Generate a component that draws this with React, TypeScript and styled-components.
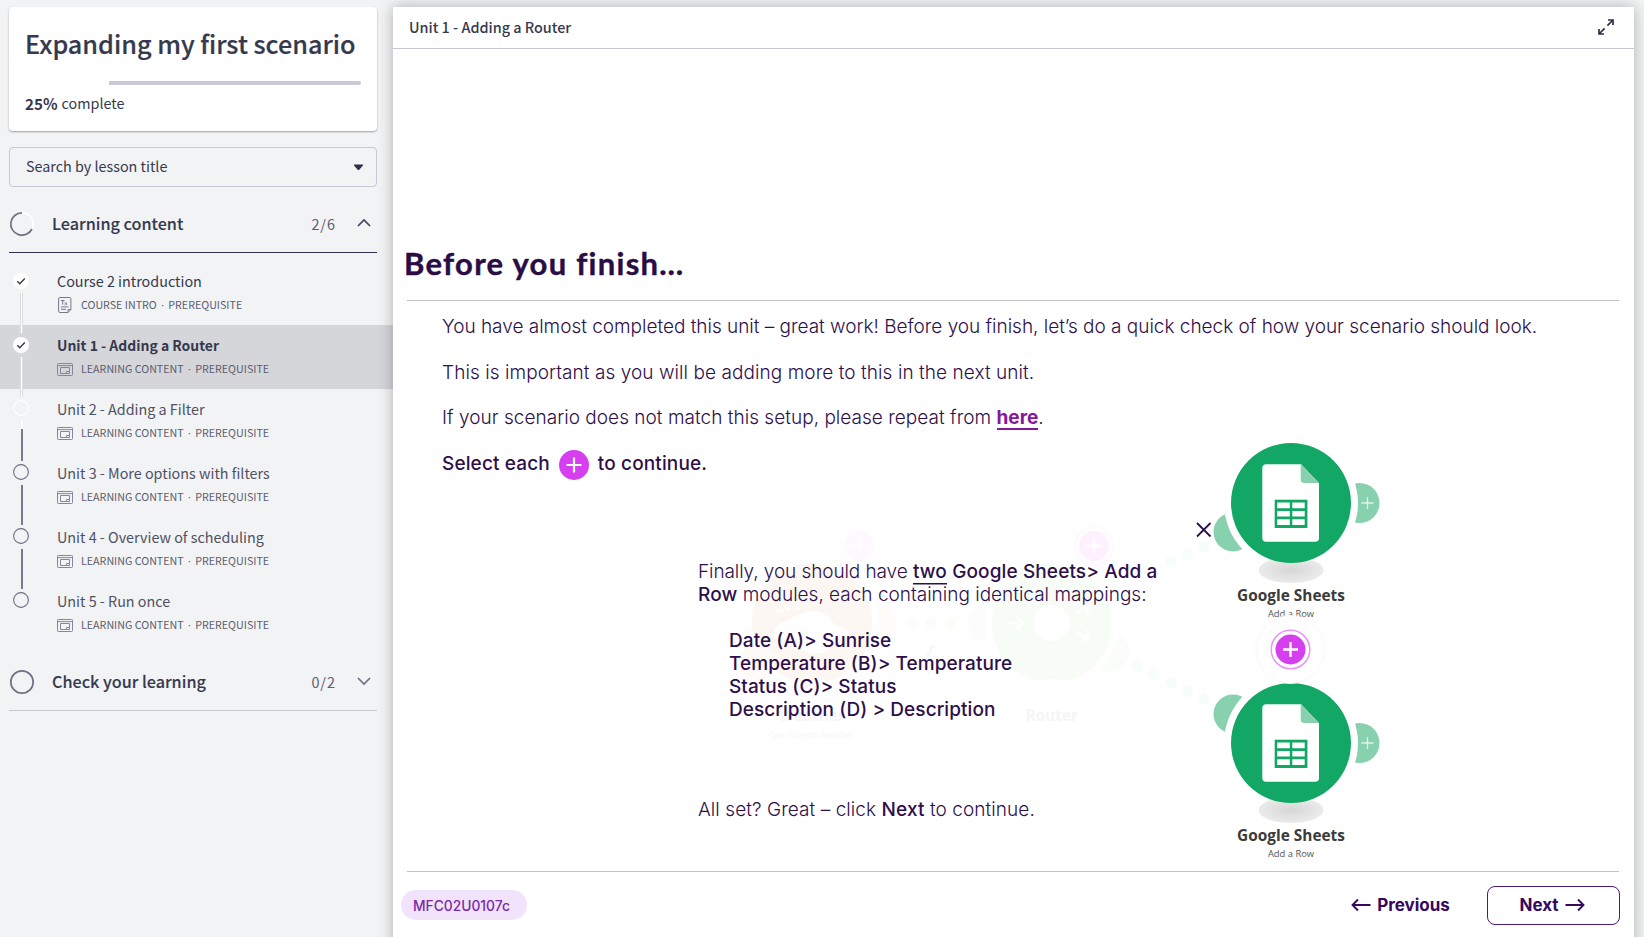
import React from 'react';
import styled, { createGlobalStyle, css } from 'styled-components';

const ink = '#36394d';
const muted = '#6f6f83';
const plum = '#2d0f4b';
const green = '#12a765';
const greenSoft = '#87d1af';
const pink = '#d63ff0';
const sans = '"Noto Sans CJK SC", "Open Sans", sans-serif';

const GlobalStyle = createGlobalStyle`
  * { box-sizing: border-box; }
  body { margin: 0; background: #f1f3f5; overflow: hidden; }
`;

const Page = styled.div`
  display: flex;
  width: 1644px;
  height: 937px;
  overflow: hidden;
  background: #f1f3f5;
  color: ${ink};
  font-family: ${sans};
`;

/* ---------- sidebar ---------- */

const Sidebar = styled.aside`
  width: 393px;
  flex: none;
  padding-top: 7px;
`;

const CourseCard = styled.section`
  width: 368px;
  height: 124px;
  margin-left: 9px;
  padding: 20px 16px 0 16px;
  background: #fff;
  border-radius: 4px;
  box-shadow: 0 1px 2px rgba(0, 0, 0, 0.35);
`;

const CourseTitle = styled.h1`
  margin: 0;
  font-size: 25.2px;
  font-weight: 500;
  line-height: 32px;
  white-space: nowrap;
  -webkit-text-stroke: 0.2px ${ink};
`;

const ProgressTrack = styled.div`
  display: flex;
  justify-content: flex-end;
  height: 4px;
  margin-top: 22px;
`;

const ProgressRemaining = styled.div`
  width: 252px;
  background: #c8cad6;
  border-radius: 0 2px 2px 0;
`;

const ProgressLabel = styled.div`
  display: flex;
  gap: 4px;
  margin-top: 7px;
  font-size: 14.35px;
  line-height: 22px;

  strong { font-size: 15.2px; font-weight: 700; }
`;

const LessonSearch = styled.div`
  display: flex;
  align-items: center;
  justify-content: space-between;
  width: 368px;
  height: 40px;
  margin: 16px 0 0 9px;
  padding: 0 12px 0 16px;
  border: 1px solid #c6c8d4;
  border-radius: 4px;
  font-size: 14.35px;
  line-height: 22px;
`;

const SearchPlaceholder = styled.span`
  padding-bottom: 2px;
`;

const SectionHeader = styled.div<{ $open?: boolean }>`
  display: flex;
  align-items: center;
  width: 368px;
  height: 66px;
  margin-left: 9px;
  padding: 6px 6px 0 0;
  border-bottom: 1px solid ${(p) => (p.$open ? '#363052' : '#c6c8d4')};

  > svg { flex: none; }
  > svg:first-child { margin-right: 17px; margin-top: 2px; }
`;

const SectionTitle = styled.h2`
  flex: 1;
  margin: 0;
  font-size: 16.2px;
  font-weight: 500;
  line-height: 24px;
  -webkit-text-stroke: 0.1px ${ink};
`;

const SectionCount = styled.span`
  margin: 2px 21px 0 0;
  font-size: 14.4px;
  letter-spacing: 1px;
  line-height: 24px;
  color: #5c5c70;
`;

const LessonList = styled.ul`
  margin: 8px 0 0;
  padding: 0;
  list-style: none;
`;

const Lesson = styled.li<{ $active?: boolean }>`
  display: flex;
  height: 64px;
  padding-left: 13px;
  background: ${(p) => (p.$active ? '#d5d6da' : 'transparent')};
`;

const Rail = styled.div<{ $done: boolean }>`
  position: relative;
  z-index: 1;
  display: flex;
  flex-direction: column;
  align-items: center;
  width: 16px;
  margin-right: 28px;
  padding-top: ${(p) => (p.$done ? 12 : 11)}px;

  svg { flex: none; }
`;

type LinkState = 'done' | 'partial' | 'todo';

const RailLink = styled.span<{ $state: LinkState; $shift: number }>`
  flex: none;
  width: 3px;
  height: 40px;
  margin: ${(p) => p.$shift}px 0 0 1px;
  ${(p) =>
    p.$state === 'todo'
      ? css`background: #7a7a8d; width: 2px;`
      : p.$state === 'done'
        ? css`background: #fff; border: solid #dcdde2; border-width: 0 1px;`
        : css`background: linear-gradient(#fff 0 8px, #7a7a8d 8px); width: 2px;`}
`;

const LessonText = styled.div<{ $strong?: boolean }>`
  display: flex;
  flex-direction: column;
  gap: 4px;
  padding-top: 9px;
  color: ${(p) => (p.$strong ? ink : '#4f5064')};
`;

const LessonTitle = styled.div<{ $strong?: boolean }>`
  font-size: ${(p) => (p.$strong ? 13.95 : 14.35)}px;
  font-weight: ${(p) => (p.$strong ? 700 : 400)};
  line-height: 22px;
  white-space: nowrap;
`;

const LessonMeta = styled.div`
  display: flex;
  align-items: center;
  height: 18px;
  font-size: 10.7px;
  line-height: 18px;
  color: #5c5c70;

  svg { flex: none; margin-right: 8px; }
`;

const MetaDot = styled.span`
  width: 11.5px;
  text-align: center;
  font-family: "Open Sans", sans-serif;
`;

/* ---------- content panel ---------- */

const Panel = styled.main`
  position: relative;
  display: flex;
  flex-direction: column;
  flex: none;
  width: 1241px;
  height: 960px;
  margin-top: 7px;
  background: #fff;
  box-shadow: 0 0 14px rgba(0, 0, 0, 0.28);
`;

const PanelHeader = styled.header`
  display: flex;
  align-items: center;
  justify-content: space-between;
  flex: none;
  height: 42px;
  padding: 0 20px 2px 16px;
  border-bottom: 1px solid #c6c8d4;
  font-size: 14.4px;
  font-weight: 500;
  line-height: 22px;
`;

const Slide = styled.article`
  position: relative;
  display: flex;
  flex-direction: column;
  flex: none;
  height: 888px;
  padding: 0 15px 0 14px;
  color: ${plum};
  font-family: Inter, sans-serif;
  font-size: 19px;
`;

const SlideTitle = styled.h2`
  height: 251px;
  margin: 0 0 0 -3px;
  padding-top: 194px;
  font-family: Lato, sans-serif;
  font-size: 31px;
  font-weight: 700;
  letter-spacing: 1.28px;
  line-height: 40px;
  color: #2a0d45;
  -webkit-text-stroke: 0.4px #2a0d45;
`;

const Rule = styled.hr`
  flex: none;
  width: 100%;
  height: 1px;
  margin: 0;
  border: 0;
  background: #c9bfc8;
`;

const Intro = styled.div`
  position: relative;
  z-index: 1;
  flex: 1;
  padding: 3px 0 0 35px;
`;

const IntroLine = styled.p<{ $strong?: boolean; $track?: number }>`
  display: flex;
  align-items: center;
  height: 45.6px;
  margin: 0;
  font-size: 19px;
  font-weight: ${(p) => (p.$strong ? 500 : 300)};
  letter-spacing: ${(p) => p.$track ?? 0}px;
  white-space: pre;

  svg { margin: 2px 8.5px 0 9.5px; }
`;

const InlineLink = styled.a`
  margin-top: 2px;
  color: #86189a;
  font-weight: 700;
  line-height: 20px;
  border-bottom: 2px solid #86189a;
`;

const Diagram = styled.svg`
  position: absolute;
  left: 0;
  top: 0;
`;

const Callout = styled.div`
  position: absolute;
  z-index: 2;
  left: 305px;
  top: 511px;
  width: 480px;
  font-size: 19px;
  font-weight: 300;
  line-height: 23px;
  white-space: nowrap;

  strong { font-weight: 500; letter-spacing: 0.12px; }
  u { text-decoration: none; box-shadow: 0 1.5px 0 ${plum}; }
`;

const CalloutLine = styled.p<{ $track?: number }>`
  margin: 0;
  letter-spacing: ${(p) => p.$track ?? 0}px;
`;

const MappingList = styled.ul`
  margin: 23px 0 77px;
  padding: 0 0 0 31px;
  list-style: none;
  font-weight: 500;
  letter-spacing: 0.07px;
`;

const SlideFooter = styled.footer`
  display: flex;
  align-items: center;
  flex: none;
  height: 65px;
  padding-top: 2px;
  margin-left: -6px;
`;

const CodePill = styled.span`
  width: 126px;
  height: 30px;
  margin: 0 auto 2px 0;
  padding-left: 12px;
  border-radius: 15px;
  background: #f1e3fb;
  color: #7a2aa8;
  font-size: 13.8px;
  font-weight: 500;
  line-height: 32px;
`;

const NavButton = styled.button<{ $outlined?: boolean }>`
  display: flex;
  align-items: center;
  justify-content: center;
  gap: 6px;
  height: 39px;
  padding: 0 0 1px;
  border: 0;
  background: none;
  color: #38085f;
  font: 700 17px Inter, sans-serif;
  ${(p) =>
    p.$outlined
      ? css`width: 133px; border: 1.5px solid #4a1a78; border-radius: 8px; padding-right: 3px; margin-right: -1px;`
      : css`width: 99px; margin-right: 37px;`}
`;

/* ---------- icons ---------- */

const StatusRing = ({ partial }: { partial?: boolean }) => (
  <svg width="26" height="26" viewBox="0 0 26 26" fill="none" strokeWidth="1.7">
    <circle cx="13" cy="13" r="11.2" stroke={partial ? '#fff' : muted} />
    {partial && <path d="M13 1.8A11.2 11.2 0 1 0 23 18" stroke={muted} />}
  </svg>
);

const Chevron = ({ up }: { up?: boolean }) => (
  <svg width="14" height="10" viewBox="0 0 14 10" fill="none" stroke={up ? '#44445c' : muted} strokeWidth="1.7">
    <path d={up ? 'M1 8L7 2L13 8' : 'M1 2L7 8L13 2'} />
  </svg>
);

const Caret = () => (
  <svg width="11" height="7" viewBox="0 0 11 7">
    <path d="M1.4 0.5H9.6Q10.6 0.5 9.9 1.5L6.3 5.8Q5.5 6.6 4.7 5.8L1.1 1.5Q0.4 0.5 1.4 0.5Z" fill="#2d3048" />
  </svg>
);

const CheckDot = () => (
  <svg width="16" height="16" viewBox="0 0 16 16" fill="none">
    <circle cx="8" cy="8" r="8" fill="#fff" />
    <path d="M4.3 8.3L6.8 10.8L11.8 5.6" stroke="#36384a" strokeWidth="1.4" />
  </svg>
);

const EmptyDot = ({ next }: { next?: boolean }) => (
  <svg width="16" height="16" viewBox="0 0 16 16" fill="none">
    <circle cx="8" cy="8" r="7.4" stroke={next ? '#fff' : muted} strokeWidth="1.1" />
  </svg>
);

const PackageIcon = () => (
  <svg width="16" height="13" viewBox="0 0 16 13" fill="none" stroke="#85869a">
    <rect x="0.5" y="0.5" width="15" height="12" rx="0.8" />
    <path d="M0.5 2.6H15.5M9.5 10.5H3.5V4.5H12.5V10.5H9.5V8.5H12.5" />
  </svg>
);

const TextPageIcon = () => (
  <svg width="16" height="16" viewBox="0 0 16 16" fill="none" stroke="#76788e">
    <path d="M11 15.5H3Q1.6 15.5 1.6 14.2V1.8Q1.6 0.5 3 0.5H12.5Q13.9 0.5 13.9 1.8V12.5L11 15.5V12.5H13.9" />
    <path d="M3.8 3.5H7.6M5.7 3.5V7.6M7.6 5.5L10.2 7.8M10.2 5.5L7.6 7.8M4 9.9H11.5M4 12.3H9" />
  </svg>
);

const ExpandIcon = () => (
  <svg width="16" height="16" viewBox="0 0 16 16" fill="none" stroke="#2d3048" strokeWidth="1.7">
    <path d="M10 1H15V6M15 1L9.4 6.6M6 15H1V10M1 15L6.6 9.4" />
  </svg>
);

const InlinePlus = () => (
  <svg width="30" height="30" viewBox="0 0 30 30">
    <circle cx="15" cy="15" r="15" fill={pink} />
    <path d="M15 7.5V22.5M7.5 15H22.5" stroke="#fff" strokeWidth="2.2" />
  </svg>
);

const Arrow = ({ left }: { left?: boolean }) => (
  <svg width="20" height="14" viewBox="0 0 20 14" fill="none" stroke="#38085f" strokeWidth="1.9">
    <path d={left ? 'M19.5 7H1.5M7 1.5L1.5 7L7 12.5' : 'M0.5 7H18.5M13 1.5L18.5 7L13 12.5'} />
  </svg>
);

/* ---------- scenario diagram ---------- */

const SheetsNode = ({ cy, side }: { cy: number; side: 1 | -1 }) => (
  <g transform={`translate(1291 ${cy})`}>
    <circle cx="-58" cy={29 * side} r="19.5" fill={greenSoft} />
    <circle cx="68.5" r="20" fill={greenSoft} />
    <circle r="67" fill="#fff" />
    <path d="M76.5 -6V6M70.5 0H82.5" stroke="#dff3e9" strokeWidth="1.3" />
    <ellipse cy="67" rx="32.5" ry="13" fill="url(#ground)" />
    <circle r="60" fill={green} />
    <path d="M-24.7 -38.7H10L28 -20V35Q28 38.7 24.3 38.7H-25Q-28.7 38.7 -28.7 35V-35Q-28.7 -38.7 -24.7 -38.7Z" fill="#fff" />
    <path d="M9.7 -38.7L28.2 -20H13.5Q9.7 -20 9.7 -24Z" fill={greenSoft} />
    <rect x="-16.3" y="-3.3" width="32.7" height="28.3" fill={green} />
    {[-0.4, 8, 16.3].map((y) => (
      <path key={y} d={`M-13.8 ${y}h12.6v5.6h-12.6zM1.3 ${y}h12.4v5.6h-12.4z`} fill="#fff" />
    ))}
    <text y="98" textAnchor="middle" fontFamily="Open Sans, sans-serif" fontSize="15.4" fontWeight="700" fill="#3b3b3b">Google Sheets</text>
    <text y="114" textAnchor="middle" fontFamily="Open Sans, sans-serif" fontSize="9.4" fill="#555">Add a Row</text>
  </g>
);

const PlusSpot = ({ x, y, fill, ring, halo }: { x: number; y: number; fill: string; ring: string; halo?: string }) => (
  <g transform={`translate(${x} ${y})`}>
    {halo && <circle r="34" fill="#fff" stroke={halo} />}
    <circle r="19.3" fill="#fff" stroke={ring} strokeWidth="1.5" />
    <circle r="15" fill={fill} />
    <path d="M0 -7.5V7.5M-7.5 0H7.5" stroke="#fff" strokeWidth="2.4" />
  </g>
);

const upperDots = [[1171, 562], [1187.5, 554], [1204, 547]];
const lowerDots = [[1137.7, 666], [1154, 674.5], [1171, 682.5], [1187.5, 691], [1204, 699]];

const FadedModules = () => (
  <g>
    <circle cx="877" cy="623" r="19" fill="#fffbf9" />
    <circle cx="812" cy="623" r="67" fill="#fff" />
    <circle cx="812" cy="623" r="60" fill="#fdf7f3" />
    <path
      d="M774 638.5a14 14 0 0 1 13 -17a20 20 0 0 1 12 -6a24 24 0 0 1 36 10a13 13 0 0 1 15 13h-15a20 20 0 0 1 -39 0z"
      fill="#fff"
    />
    <path d="M777 611h7M784 605l5 5M798 601v9" stroke="#fff" strokeWidth="3.5" />
    <circle cx="757" cy="662" r="18" fill="#fefaf7" />
    <path d="M757 676l16-16" stroke="#fff" strokeWidth="2" />
    {[913, 931, 950].map((x) => <circle key={x} cx={x} cy="623" r="6" fill="#fcfdfb" />)}
    <circle cx="987" cy="623" r="19" fill="#fbfdfa" />
    <circle cx="1109" cy="652" r="20" fill="#fbfdfa" />
    <circle cx="1051.7" cy="623" r="67" fill="#fff" />
    <circle cx="1051.7" cy="623" r="60" fill="#f8fcf6" />
    <circle cx="1051.7" cy="623" r="18" fill="#fff" />
    <path
      d="M1007 623h16M1016 616l7 7l-7 7M1077 612l12-6M1081 602l8 4l-3 9M1077 633l12 6M1087 630l2 9l-9 3"
      fill="none"
      stroke="#fff"
      strokeWidth="2.6"
    />
    <path d="M926 657l6-6M931 652a4 4 0 0 1 4-6" stroke="#f7f8f9" strokeWidth="3" fill="none" />
    <ellipse cx="812" cy="690" rx="32" ry="11" fill="#fefefe" />
    <ellipse cx="1051.7" cy="690" rx="32" ry="11" fill="#fefefe" />
    {upperDots.map(([x, y]) => <circle key={x} cx={x} cy={y} r="6" fill="#f8fcfa" />)}
    {lowerDots.map(([x, y]) => <circle key={x} cx={x} cy={y} r="6" fill="#f8fcfa" />)}
    <g textAnchor="middle" fontFamily="Open Sans, sans-serif" fill="#f5f5f6">
      <text x="812" y="721" fontSize="15.4" fontWeight="700">Weather</text>
      <text x="812" y="738" fontSize="9">Get current weather</text>
      <text x="1051.7" y="721" fontSize="15.4" fontWeight="700">Router</text>
    </g>
    <PlusSpot x={859} y={546} fill="#fef8ff" ring="#fffdff" />
    <PlusSpot x={1094} y={546} fill="#fff0ff" ring="#fff7ff" />
  </g>
);

const ScenarioDiagram = () => (
  <Diagram width="1241" height="888" viewBox="393 49 1241 888">
    <defs>
      <radialGradient id="ground">
        <stop offset="0" stopColor="#d6d6d6" />
        <stop offset="1" stopColor="#ebebeb" />
      </radialGradient>
    </defs>
    <FadedModules />
    <SheetsNode cy={503} side={1} />
    <SheetsNode cy={743} side={-1} />
    <PlusSpot x={1290.5} y={649.5} fill={pink} ring="#eb93fa" halo="#fdf3fe" />
    <path d="M1197 523L1210.5 536.5M1210.5 523L1197 536.5" stroke={plum} strokeWidth="1.8" />
  </Diagram>
);

/* ---------- page ---------- */

interface LessonData {
  title: string;
  kind: string;
  status: 'done' | 'next' | 'todo';
  link?: LinkState;
  active?: boolean;
}

const lessons: LessonData[] = [
  { title: 'Course 2 introduction', kind: 'COURSE INTRO', status: 'done', link: 'done' },
  { title: 'Unit 1 - Adding a Router', kind: 'LEARNING CONTENT', status: 'done', link: 'done', active: true },
  { title: 'Unit 2 - Adding a Filter', kind: 'LEARNING CONTENT', status: 'next', link: 'partial' },
  { title: 'Unit 3 - More options with filters', kind: 'LEARNING CONTENT', status: 'todo', link: 'todo' },
  { title: 'Unit 4 - Overview of scheduling', kind: 'LEARNING CONTENT', status: 'todo', link: 'todo' },
  { title: 'Unit 5 - Run once', kind: 'LEARNING CONTENT', status: 'todo' },
];

export default function App() {
  return (
    <Page>
      <GlobalStyle />
      <Sidebar>
        <CourseCard>
          <CourseTitle>Expanding my first scenario</CourseTitle>
          <ProgressTrack><ProgressRemaining /></ProgressTrack>
          <ProgressLabel><strong>25%</strong>complete</ProgressLabel>
        </CourseCard>
        <LessonSearch><SearchPlaceholder>Search by lesson title</SearchPlaceholder><Caret /></LessonSearch>
        <SectionHeader $open>
          <StatusRing partial />
          <SectionTitle>Learning content</SectionTitle>
          <SectionCount>2/6</SectionCount>
          <Chevron up />
        </SectionHeader>
        <LessonList>
          {lessons.map((l) => (
            <Lesson key={l.title} $active={l.active}>
              <Rail $done={l.status === 'done'}>
                {l.status === 'done' ? <CheckDot /> : <EmptyDot next={l.status === 'next'} />}
                {l.link && <RailLink $state={l.link} $shift={l.status === 'done' ? 4 : 5} />}
              </Rail>
              <LessonText $strong={l.active || l.status === 'done'}>
                <LessonTitle $strong={l.active}>{l.title}</LessonTitle>
                <LessonMeta>
                  {l.kind === 'COURSE INTRO' ? <TextPageIcon /> : <PackageIcon />}
                  {l.kind}<MetaDot>·</MetaDot>PREREQUISITE
                </LessonMeta>
              </LessonText>
            </Lesson>
          ))}
        </LessonList>
        <SectionHeader>
          <StatusRing />
          <SectionTitle>Check your learning</SectionTitle>
          <SectionCount>0/2</SectionCount>
          <Chevron />
        </SectionHeader>
      </Sidebar>

      <Panel>
        <PanelHeader>Unit 1 - Adding a Router<ExpandIcon /></PanelHeader>
        <Slide>
          <ScenarioDiagram />
          <SlideTitle>Before you finish…</SlideTitle>
          <Rule />
          <Intro>
            <IntroLine $track={-0.015}>
              You have almost completed this unit – great work! Before you finish, let’s do a quick check of how your scenario should look.
            </IntroLine>
            <IntroLine $track={0.07}>This is important as you will be adding more to this in the next unit.</IntroLine>
            <IntroLine $track={0.03}>If your scenario does not match this setup, please repeat from <InlineLink>here</InlineLink>.</IntroLine>
            <IntroLine $strong $track={0.13}>Select each<InlinePlus />to continue.</IntroLine>
          </Intro>
          <Callout>
            <CalloutLine $track={-0.09}>Finally, you should have <strong><u>two</u> Google Sheets&gt; Add a</strong></CalloutLine>
            <CalloutLine><strong>Row</strong> modules, each containing identical mappings:</CalloutLine>
            <MappingList>
              <li>Date (A)&gt; Sunrise</li>
              <li>Temperature (B)&gt; Temperature</li>
              <li>Status (C)&gt; Status</li>
              <li>Description (D) &gt; Description</li>
            </MappingList>
            <CalloutLine $track={0.07}>All set? Great – click <strong>Next</strong> to continue.</CalloutLine>
          </Callout>
          <Rule />
          <SlideFooter>
            <CodePill>MFC02U0107c</CodePill>
            <NavButton><Arrow left />Previous</NavButton>
            <NavButton $outlined>Next<Arrow /></NavButton>
          </SlideFooter>
        </Slide>
      </Panel>
    </Page>
  );
}
